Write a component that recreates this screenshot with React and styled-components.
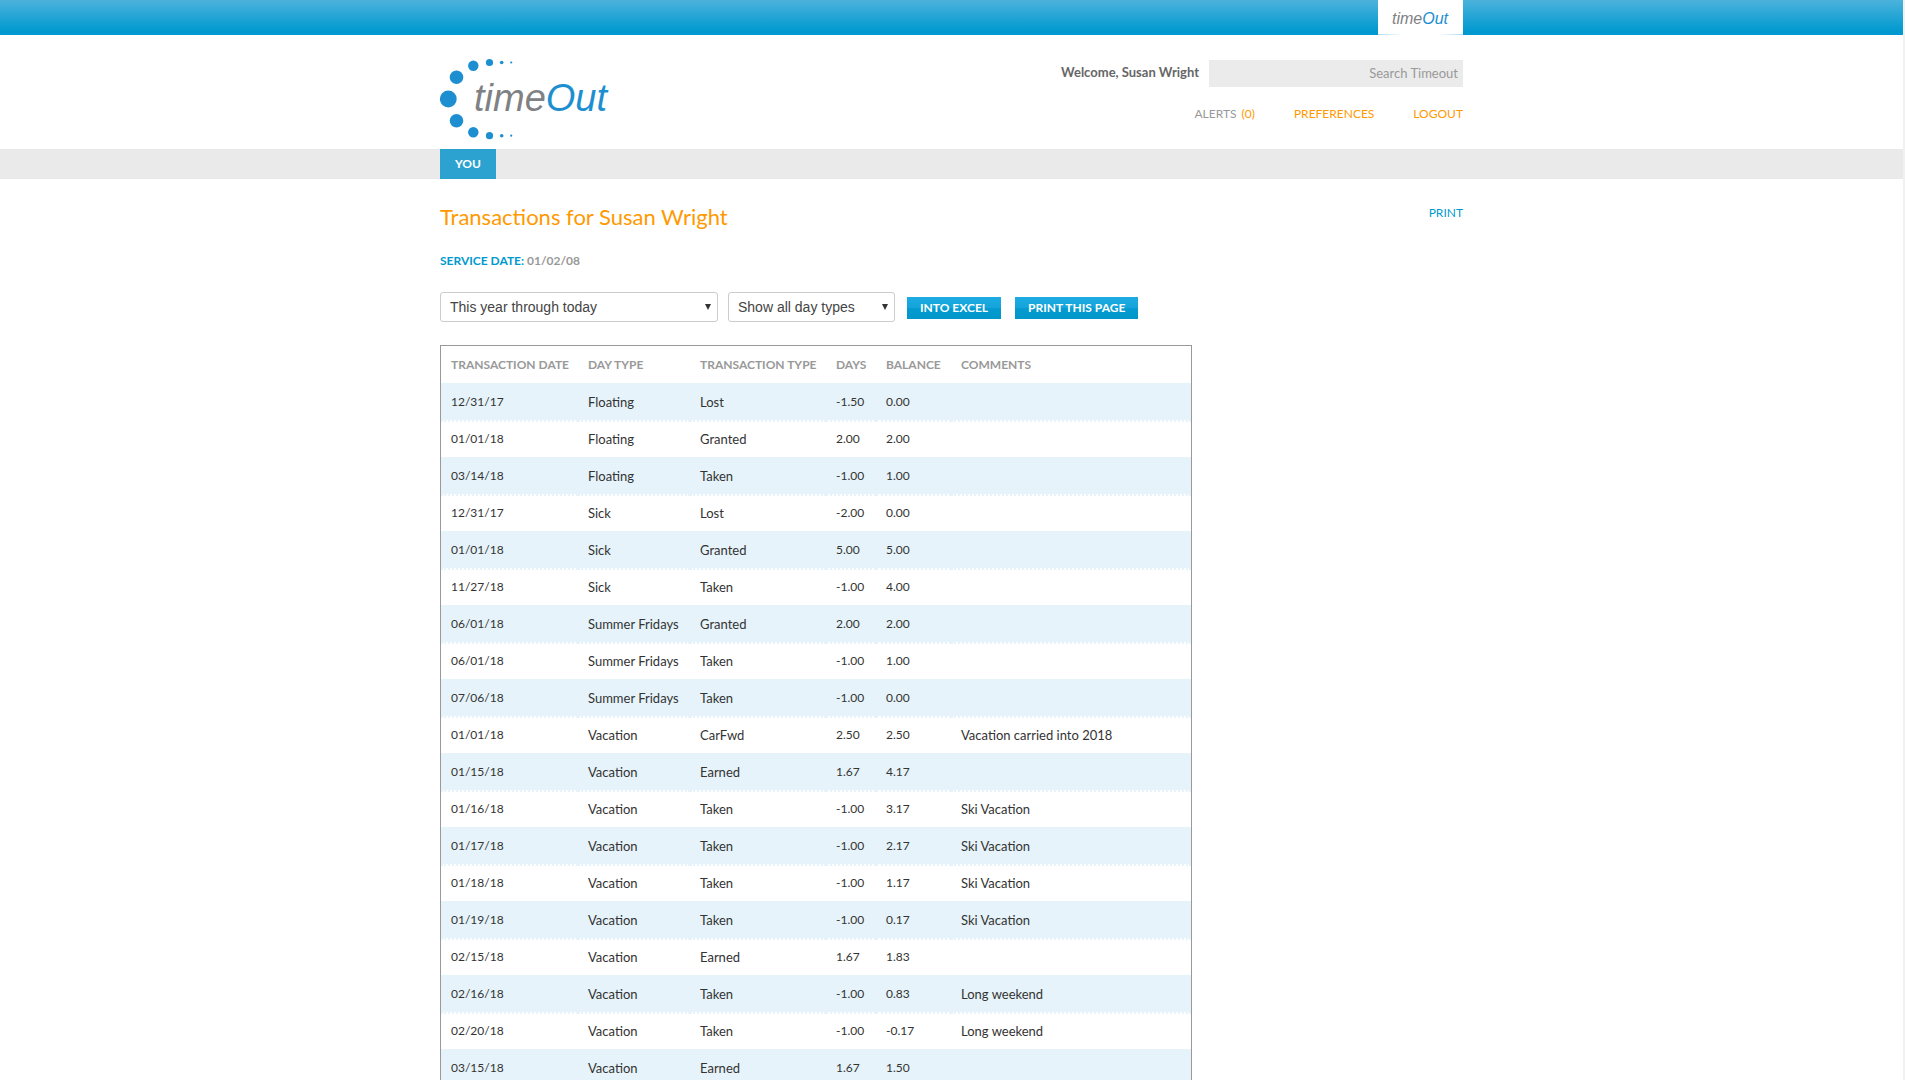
import React from "react";
import styled, { createGlobalStyle } from "styled-components";

const GlobalStyle = createGlobalStyle`
	* {
		box-sizing: border-box;
	}
	body {
		margin: 0;
		background: #fff;
		border-right: 2px solid #f1f1f1;
		color: #333;
		font-family: Lato, sans-serif;
		font-size: 12px;
		line-height: 16px;
	}
	a {
		text-decoration: none;
	}
`;

const Wrap = styled.div`
	width: 100%;
	max-width: 1023px;
	margin: 0 auto;
`;

const TopBar = styled.div`
	background: linear-gradient(#4cb2dc, #0099cf 90%);
`;
const TopBarInner = styled(Wrap)`
	display: flex;
	justify-content: flex-end;
`;
const BrandTab = styled.a`
	display: flex;
	justify-content: center;
	width: 85px;
	height: 35px;
	background: #fff;
	border-bottom: 1px solid;
	border-image: linear-gradient(90deg, #a5daf0, #fff 30%, #fff 70%, #a5daf0) 1;
`;

const Header = styled(Wrap)`
	display: flex;
	justify-content: space-between;
	height: 114px;
	padding-top: 23px;
`;
const Account = styled.div`
	display: flex;
	flex-direction: column;
	align-items: flex-end;
	gap: 19px;
	padding-top: 2px;
`;
const SearchRow = styled.form`
	display: flex;
	gap: 10px;
`;
const Welcome = styled.strong`
	padding-top: 4px;
	color: #666;
	font-size: 13px;
`;
const SearchInput = styled.input`
	width: 254px;
	height: 27px;
	padding: 0 5px 2px;
	border: 0;
	background: #ebebeb;
	color: #666;
	font-family: inherit;
	font-size: 13px;
	text-align: right;
	&::placeholder {
		color: #999;
		opacity: 1;
	}
`;
const AccountLinks = styled.nav`
	display: flex;
	gap: 39px;
`;
const AccountLink = styled.a`
	color: #f90;
`;
const Muted = styled.span`
	margin-right: 2px;
	color: #999;
`;

const NavBar = styled.nav`
	background: #eaeaea;
`;
const NavTab = styled.a`
	display: inline-block;
	padding: 0 15px;
	background: #2ba2d0;
	color: #fff;
	font-size: 12px;
	font-weight: bold;
	line-height: 30px;
	vertical-align: top;
`;

const TitleRow = styled.div`
	display: flex;
	justify-content: space-between;
	padding-top: 23px;
`;
const Title = styled.h1`
	margin: 0;
	color: #f90;
	font-size: 22px;
	font-weight: normal;
	line-height: 30px;
`;
const PrintLink = styled.a`
	padding-top: 3px;
	color: #0099cf;
`;
const ServiceDate = styled.p`
	margin: 21px 0 23px;
	color: #999;
	font-weight: bold;
`;
const Label = styled.span`
	color: #0099cf;
`;

const Filters = styled.form`
	display: flex;
	align-items: center;
	gap: 10px;
	margin-bottom: 23px;
`;
const SelectBox = styled.div`
	position: relative;
	width: ${props => (props.$wide ? "278px" : "167px")};
`;
const Select = styled.select`
	display: block;
	width: 100%;
	height: 30px;
	padding: 0 9px;
	appearance: none;
	border: 1px solid #ccc;
	border-radius: 3px;
	background: #fff;
	color: #444;
	font-family: "Liberation Sans", Arial, sans-serif;
	font-size: 14px;
`;
const Arrow = styled.svg`
	position: absolute;
	top: 12px;
	right: 7px;
	pointer-events: none;
`;
const Actions = styled.div`
	display: flex;
	gap: 14px;
	padding: 2px 0 0 2px;
`;
const Button = styled.button`
	height: 22px;
	padding: 0 13px;
	border: 0;
	background: linear-gradient(#1cabe2, #14a4da 50%, #039bd1 50%, #0096c9);
	color: #fff;
	font-family: inherit;
	font-size: 12px;
	font-weight: bold;
	line-height: 22px;
`;

const Table = styled.table`
	width: 100%;
	max-width: 752px;
	border: 1px solid #999;
	border-spacing: 0;
	table-layout: fixed;
	text-align: left;
`;
const Col = styled.col`
	width: ${props => (props.$width ? `${props.$width}px` : "auto")};
`;
const HeadCell = styled.th`
	height: 37px;
	padding: 0 10px;
	color: #999;
	white-space: nowrap;
`;
const Row = styled.tr`
	background: #fff;
	&:nth-child(odd) {
		background: #e6f3fa;
	}
`;
const Cell = styled.td`
	height: 37px;
	padding: 0 10px 2px;
	border-top: 2px dotted #e6f3fa;
	font-size: ${props => (props.$numeric ? "12px" : "13px")};
	white-space: nowrap;
`;

const columns = [
	{ name: "TRANSACTION DATE", width: 137, numeric: true },
	{ name: "DAY TYPE", width: 112 },
	{ name: "TRANSACTION TYPE", width: 136 },
	{ name: "DAYS", width: 50, numeric: true },
	{ name: "BALANCE", width: 75, numeric: true },
	{ name: "COMMENTS" }
];

const transactions = [
	["12/31/17", "Floating", "Lost", "-1.50", "0.00", ""],
	["01/01/18", "Floating", "Granted", "2.00", "2.00", ""],
	["03/14/18", "Floating", "Taken", "-1.00", "1.00", ""],
	["12/31/17", "Sick", "Lost", "-2.00", "0.00", ""],
	["01/01/18", "Sick", "Granted", "5.00", "5.00", ""],
	["11/27/18", "Sick", "Taken", "-1.00", "4.00", ""],
	["06/01/18", "Summer Fridays", "Granted", "2.00", "2.00", ""],
	["06/01/18", "Summer Fridays", "Taken", "-1.00", "1.00", ""],
	["07/06/18", "Summer Fridays", "Taken", "-1.00", "0.00", ""],
	["01/01/18", "Vacation", "CarFwd", "2.50", "2.50", "Vacation carried into 2018"],
	["01/15/18", "Vacation", "Earned", "1.67", "4.17", ""],
	["01/16/18", "Vacation", "Taken", "-1.00", "3.17", "Ski Vacation"],
	["01/17/18", "Vacation", "Taken", "-1.00", "2.17", "Ski Vacation"],
	["01/18/18", "Vacation", "Taken", "-1.00", "1.17", "Ski Vacation"],
	["01/19/18", "Vacation", "Taken", "-1.00", "0.17", "Ski Vacation"],
	["02/15/18", "Vacation", "Earned", "1.67", "1.83", ""],
	["02/16/18", "Vacation", "Taken", "-1.00", "0.83", "Long weekend"],
	["02/20/18", "Vacation", "Taken", "-1.00", "-0.17", "Long weekend"],
	["03/15/18", "Vacation", "Earned", "1.67", "1.50", ""]
];

const dots = [
	[8.3, 41, 8.4],
	[16.5, 19.3, 6.8],
	[16.5, 62.7, 6.8],
	[33.3, 7.8, 5.2],
	[33.3, 74.3, 5.2],
	[49.5, 4.5, 3.6],
	[49.5, 77.7, 3.6],
	[61.7, 4.5, 1.8],
	[61.7, 77.7, 1.8],
	[71.2, 4.5, 1.1],
	[71.2, 77.7, 1.1]
];

const Wordmark = ({ x, y, size }) => (
	<text
		x={x}
		y={y}
		fontFamily="'Liberation Sans', Arial, sans-serif"
		fontStyle="italic"
		fontSize={size}
		fill="#808184"
	>
		time<tspan fill="#1d8fd1">Out</tspan>
	</text>
);

const Logo = () => (
	<svg width="180" height="82" viewBox="0 0 180 82">
		{dots.map(([cx, cy, r]) => (
			<circle key={`${cx}-${cy}`} cx={cx} cy={cy} r={r} fill="#1d8fd1" />
		))}
		<Wordmark x={34} y={53} size={38} />
	</svg>
);

const Dropdown = ({ label, options, wide }) => (
	<SelectBox $wide={wide}>
		<Select aria-label={label}>
			{options.map(option => (
				<option key={option}>{option}</option>
			))}
		</Select>
		<Arrow width="6" height="6" viewBox="0 0 6 6">
			<path d="M0 0h6L3 6z" fill="#333" />
		</Arrow>
	</SelectBox>
);

export default () => (
	<div>
		<GlobalStyle />
		<TopBar>
			<TopBarInner>
				<BrandTab href="#">
					<svg width="64" height="34" viewBox="0 0 64 34">
						<Wordmark x={3} y={24} size={16} />
					</svg>
				</BrandTab>
			</TopBarInner>
		</TopBar>
		<Header as="header">
			<Logo />
			<Account>
				<SearchRow>
					<Welcome>Welcome, Susan Wright</Welcome>
					<SearchInput type="text" aria-label="Search Timeout" placeholder="Search Timeout" />
				</SearchRow>
				<AccountLinks>
					<AccountLink href="#">
						<Muted>ALERTS</Muted> (0)
					</AccountLink>
					<AccountLink href="#">PREFERENCES</AccountLink>
					<AccountLink href="#">LOGOUT</AccountLink>
				</AccountLinks>
			</Account>
		</Header>
		<NavBar>
			<Wrap>
				<NavTab href="#">YOU</NavTab>
			</Wrap>
		</NavBar>
		<Wrap as="main">
			<TitleRow>
				<Title>Transactions for Susan Wright</Title>
				<PrintLink href="#">PRINT</PrintLink>
			</TitleRow>
			<ServiceDate>
				<Label>SERVICE DATE:</Label> 01/02/08
			</ServiceDate>
			<Filters>
				<Dropdown label="Period" wide options={["This year through today"]} />
				<Dropdown label="Day type" options={["Show all day types"]} />
				<Actions>
					<Button type="button">INTO EXCEL</Button>
					<Button type="button">PRINT THIS PAGE</Button>
				</Actions>
			</Filters>
			<Table>
				<colgroup>
					{columns.map(col => (
						<Col key={col.name} $width={col.width} />
					))}
				</colgroup>
				<thead>
					<tr>
						{columns.map(col => (
							<HeadCell key={col.name} scope="col">
								{col.name}
							</HeadCell>
						))}
					</tr>
				</thead>
				<tbody>
					{transactions.map((transaction, index) => (
						<Row key={index}>
							{transaction.map((value, i) => (
								<Cell key={columns[i].name} $numeric={columns[i].numeric}>
									{value}
								</Cell>
							))}
						</Row>
					))}
				</tbody>
			</Table>
		</Wrap>
	</div>
);
